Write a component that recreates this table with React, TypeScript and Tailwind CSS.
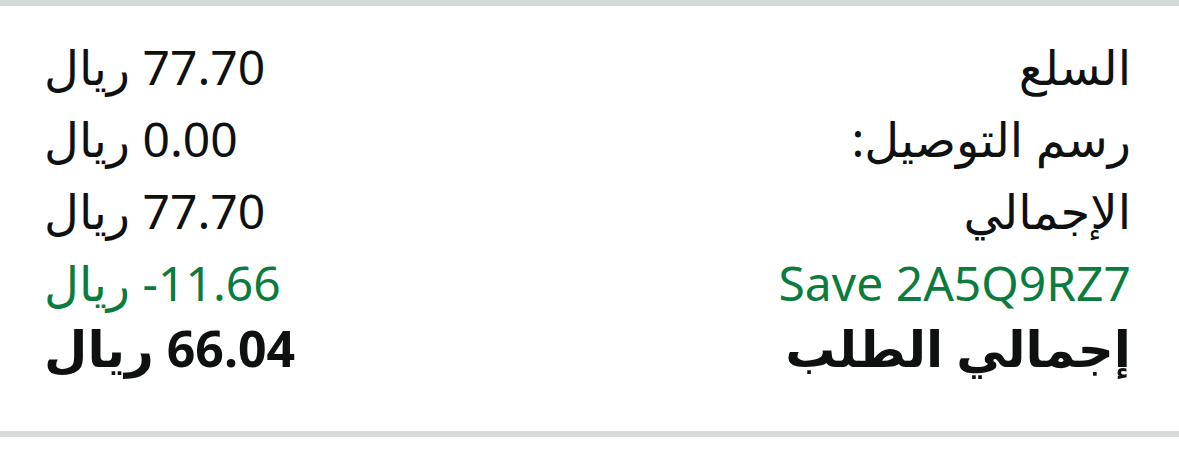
const rows = [
  { label: "السلع", value: "77.70 ريال" },
  { label: "رسم التوصيل:", value: "0.00 ريال" },
  { label: "الإجمالي", value: "77.70 ريال" },
];

export default function App() {
  return (
    <div dir="rtl" className="w-[1179px] h-[466px] bg-white text-[#0f1111] font-['Noto_Sans','DejaVu_Sans',sans-serif]">
      <div className="h-[6px] bg-[#d5d9d9]" />
      <div className="pr-[48px] pl-[44px] pt-[25px] pb-[54px]">
        {rows.map((row) => (
          <div key={row.label} className="flex justify-between text-[48px] leading-[72px]">
            <span>{row.label}</span>
            <span>{row.value}</span>
          </div>
        ))}
        <div className="flex justify-between text-[48px] leading-[72px] text-[#0b7b3e]">
          <span>Save 2A5Q9RZ7</span>
          <span>11.66- ريال</span>
        </div>
        <div className="flex justify-between text-[50px] leading-[58px] font-bold">
          <span>إجمالي الطلب</span>
          <span>66.04 ريال</span>
        </div>
      </div>
      <div className="h-[6px] bg-[#d5d9d9]" />
    </div>
  );
}
